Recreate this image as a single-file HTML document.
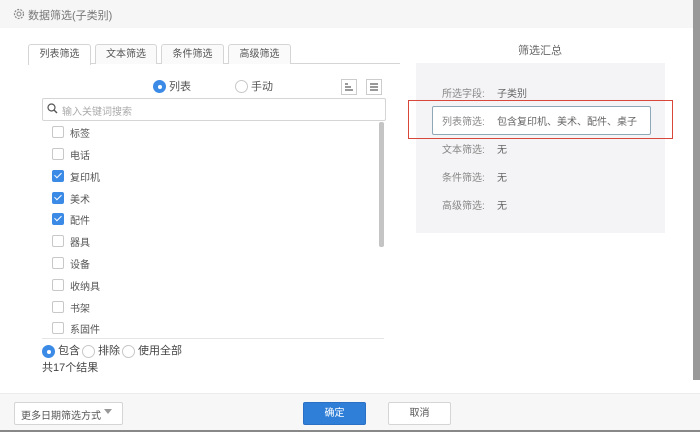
<html><head><style>
body{margin:0;width:700px;height:432px;position:relative;background:#fff;font-family:"Liberation Sans","Noto Sans CJK SC",sans-serif;font-size:10px;color:#555;overflow:hidden}
.a{position:absolute}
.tab{position:absolute;top:44px;height:19px;border:1px solid #d5d5d5;border-bottom:none;border-radius:3px 3px 0 0;background:#fafafa;text-align:center;line-height:19px;color:#555}
.cb{position:absolute;left:52px;width:10px;height:10px;border:1px solid #c8c8c8;border-radius:2px;background:#fff}
.cb.on{background:#3b8ae6;border-color:#3b8ae6}
.cb.on::after{content:"";position:absolute;left:3px;top:0px;width:3px;height:6px;border:solid #fff;border-width:0 1.5px 1.5px 0;transform:rotate(45deg)}
.it{position:absolute;left:70px;color:#555}
.rd{position:absolute;width:11px;height:11px;border:1px solid #c8c8c8;border-radius:50%;background:#fff}
.rd.on{background:#3b8ae6;border-color:#3b8ae6}
.rd.on::after{content:"";position:absolute;left:3.5px;top:3.5px;width:4px;height:4px;border-radius:50%;background:#fff}
.lb{position:absolute;left:442px;color:#888}
.vl{position:absolute;left:497px;color:#666}
</style></head><body>
<div class="a" style="left:0;top:0;width:700px;height:28px;background:#f6f6f6"></div>
<svg class="a" style="left:13px;top:8px" width="12" height="12" viewBox="0 0 12 12"><circle cx="6" cy="6" r="4.5" fill="none" stroke="#888" stroke-width="1.2" stroke-dasharray="2 1.2"/><circle cx="6" cy="6" r="2" fill="none" stroke="#888" stroke-width="1"/></svg>
<div class="a" style="left:28px;top:7px;font-size:11px;color:#777">数据筛选(子类别)</div>
<div class="a" style="left:693px;top:0;width:7px;height:380px;background:#999"></div>
<div class="a" style="left:28px;top:63px;width:372px;height:1px;background:#d5d5d5"></div>
<div class="tab" style="left:28px;width:61px;background:#fff;height:20px">列表筛选</div>
<div class="tab" style="left:95px;width:60px">文本筛选</div>
<div class="tab" style="left:161px;width:61px">条件筛选</div>
<div class="tab" style="left:228px;width:61px">高级筛选</div>
<div class="rd on" style="left:153px;top:80px"></div><div class="a" style="left:169px;top:78px;font-size:11px">列表</div>
<div class="rd" style="left:235px;top:80px"></div><div class="a" style="left:251px;top:78px;font-size:11px">手动</div>
<div class="a" style="left:341px;top:79px;width:14px;height:14px;border:1px solid #ccc;background:#fff"></div>
<svg class="a" style="left:344px;top:82px" width="10" height="10"><path d="M1 2h3M1 5h6M1 8h8" stroke="#333"/></svg>
<div class="a" style="left:366px;top:79px;width:14px;height:14px;border:1px solid #ccc;background:#fff"></div>
<svg class="a" style="left:369px;top:82px" width="10" height="10"><path d="M1 2h8M1 5h8M1 8h8" stroke="#333"/></svg>
<div class="a" style="left:42px;top:98px;width:342px;height:21px;border:1px solid #d5d5d5;border-radius:2px"></div>
<svg class="a" style="left:47px;top:103px" width="11" height="11"><circle cx="4.5" cy="4.5" r="3.5" fill="none" stroke="#555" stroke-width="1.2"/><path d="M7 7l3 3" stroke="#555" stroke-width="1.4"/></svg>
<div class="a" style="left:62px;top:103px;color:#aaa">输入关键词搜索</div>
<div class="a" style="left:379px;top:122px;width:5px;height:125px;background:#c4c4c4;border-radius:2px"></div>
<div class="cb" style="top:126px"></div><div class="it" style="top:125px">标签</div>
<div class="cb" style="top:148px"></div><div class="it" style="top:147px">电话</div>
<div class="cb on" style="top:170px"></div><div class="it" style="top:169px">复印机</div>
<div class="cb on" style="top:192px"></div><div class="it" style="top:191px">美术</div>
<div class="cb on" style="top:213px"></div><div class="it" style="top:212px">配件</div>
<div class="cb" style="top:235px"></div><div class="it" style="top:234px">器具</div>
<div class="cb" style="top:257px"></div><div class="it" style="top:256px">设备</div>
<div class="cb" style="top:279px"></div><div class="it" style="top:278px">收纳具</div>
<div class="cb" style="top:301px"></div><div class="it" style="top:300px">书架</div>
<div class="cb" style="top:322px"></div><div class="it" style="top:321px">系固件</div>
<div class="a" style="left:42px;top:338px;width:342px;height:1px;background:#e5e5e5"></div>
<div class="rd on" style="left:42px;top:345px"></div><div class="a" style="left:58px;top:342px;font-size:11px;color:#444">包含</div>
<div class="rd" style="left:82px;top:345px"></div><div class="a" style="left:98px;top:342px;font-size:11px;color:#444">排除</div>
<div class="rd" style="left:122px;top:345px"></div><div class="a" style="left:138px;top:342px;font-size:11px;color:#444">使用全部</div>
<div class="a" style="left:42px;top:359px;font-size:11px;color:#444">共17个结果</div>
<div class="a" style="left:518px;top:42px;font-size:11px;color:#666">筛选汇总</div>
<div class="a" style="left:416px;top:63px;width:249px;height:170px;background:#f4f3f5"></div>
<div class="lb" style="top:85px">所选字段:</div><div class="vl" style="top:85px">子类别</div>
<div class="a" style="left:408px;top:100px;width:263px;height:37px;border:1px solid #d9463a"></div>
<div class="a" style="left:432px;top:106px;width:217px;height:27px;border:1px solid #8fa8b8;border-radius:2px;background:#fff"></div>
<div class="lb" style="top:113px">列表筛选:</div><div class="vl" style="top:113px">包含复印机、美术、配件、桌子</div>
<div class="lb" style="top:141px">文本筛选:</div><div class="vl" style="top:141px">无</div>
<div class="lb" style="top:169px">条件筛选:</div><div class="vl" style="top:169px">无</div>
<div class="lb" style="top:197px">高级筛选:</div><div class="vl" style="top:197px">无</div>
<div class="a" style="left:0;top:393px;width:700px;height:37px;background:#f7f7f7;border-top:1px solid #ececec"></div>
<div class="a" style="left:0;top:430px;width:700px;height:2px;background:#888"></div>
<div class="a" style="left:14px;top:402px;width:107px;height:21px;border:1px solid #d5d5d5;background:#fff;border-radius:2px"></div>
<div class="a" style="left:21px;top:407px;color:#555">更多日期筛选方式</div>
<svg class="a" style="left:104px;top:409px" width="8" height="6"><path d="M0 0h8L4 5z" fill="#999"/></svg>
<div class="a" style="left:303px;top:402px;width:61px;height:21px;background:#2f7fd8;border:1px solid #2a70c4;border-radius:2px;color:#fff;text-align:center;line-height:21px">确定</div>
<div class="a" style="left:388px;top:402px;width:61px;height:21px;background:#fff;border:1px solid #d5d5d5;border-radius:2px;color:#555;text-align:center;line-height:21px">取消</div>
</body></html>
